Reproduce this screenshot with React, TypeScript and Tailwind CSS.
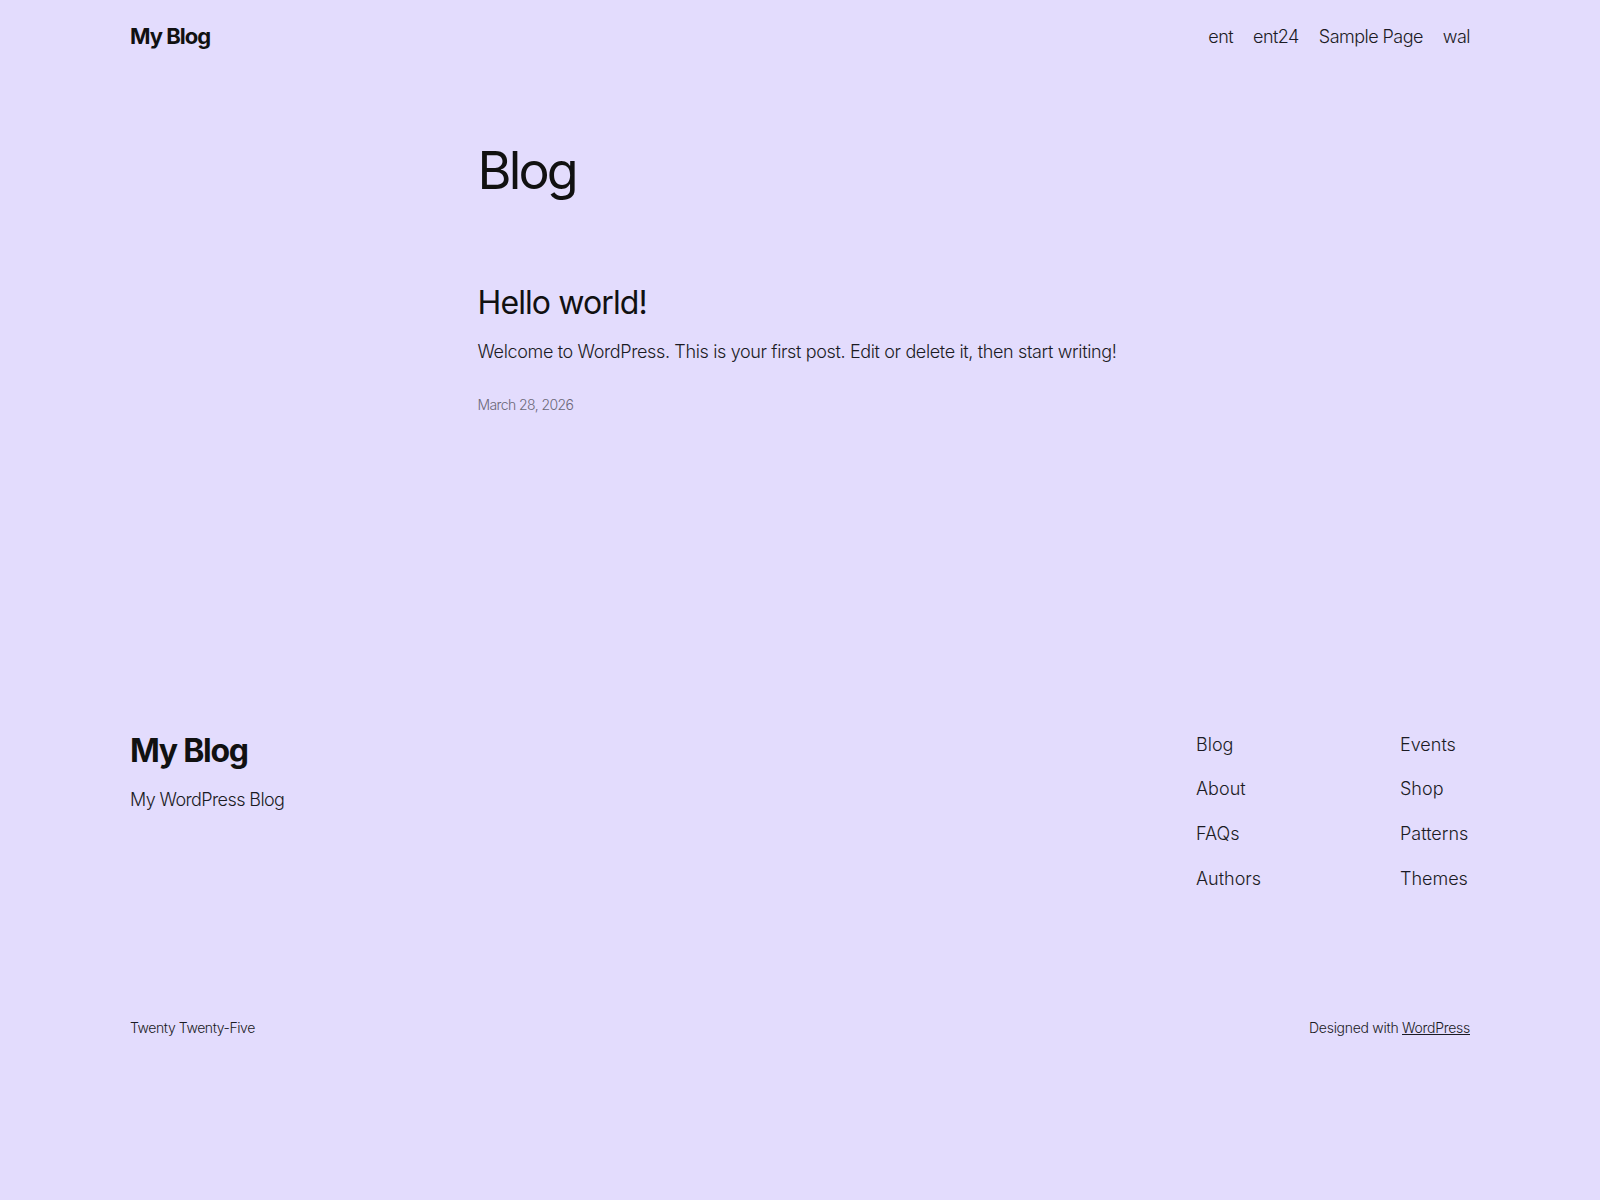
import React from "react";

export default function App() {
  const font = { fontFamily: "Inter, 'Noto Sans', sans-serif" };
  return (
    <div className="min-h-[1200px] w-full bg-[#e3dcfd] text-[#111111]" style={font}>
      <header className="mx-auto flex h-[72px] w-[1340px] items-center justify-between">
        <a className="text-[22px] font-bold leading-none tracking-[-0.045em]">My Blog</a>
        <nav className="flex items-center gap-[20px] text-[18px] font-light tracking-[-0.03em] text-[#1b1b24]">
          <a>ent</a>
          <a>ent24</a>
          <a>Sample Page</a>
          <a>wal</a>
        </nav>
      </header>

      <main className="mx-auto w-[645px]">
        <h1 className="mt-[68px] text-[52px] font-normal leading-[1.2] tracking-[-0.055em]">Blog</h1>
        <article className="mt-[82px]">
          <h2 className="text-[32px] font-normal leading-[1.2] tracking-[-0.028em]">Hello world!</h2>
          <p className="mt-[15px] whitespace-nowrap text-[18px] font-light leading-[1.6] tracking-[-0.02em] text-[#1b1b24]">
            Welcome to WordPress. This is your first post. Edit or delete it, then start writing!
          </p>
          <p className="mt-[27px] text-[14px] font-light leading-[1.5] tracking-[-0.042em] text-[#6b6878]">March 28, 2026</p>
        </article>
      </main>

      <footer className="mx-auto mt-[317px] w-[1340px]">
        <div className="flex justify-between">
          <div>
            <div className="text-[32px] font-bold leading-[1.2] tracking-[-0.04em]">My Blog</div>
            <p className="mt-[16px] text-[18px] font-light leading-[1.6] tracking-[-0.033em] text-[#1b1b24]">My WordPress Blog</p>
          </div>
          <div className="-mt-[1px] flex text-[18px] font-light leading-[1.6] text-[#1b1b24]">
            <div className="flex w-[204px] flex-col gap-[16px]">
              <a>Blog</a>
              <a>About</a>
              <a>FAQs</a>
              <a>Authors</a>
            </div>
            <div className="flex w-[70px] flex-col gap-[16px] whitespace-nowrap">
              <a>Events</a>
              <a>Shop</a>
              <a>Patterns</a>
              <a>Themes</a>
            </div>
          </div>
        </div>
        <div className="mt-[123px] flex justify-between text-[14px] font-light leading-[1.5] text-[#1b1b24]">
          <span className="tracking-[-0.03em]">Twenty Twenty-Five</span>
          <span className="tracking-[-0.02em]">
            Designed with <a className="underline">WordPress</a>
          </span>
        </div>
      </footer>
    </div>
  );
}
